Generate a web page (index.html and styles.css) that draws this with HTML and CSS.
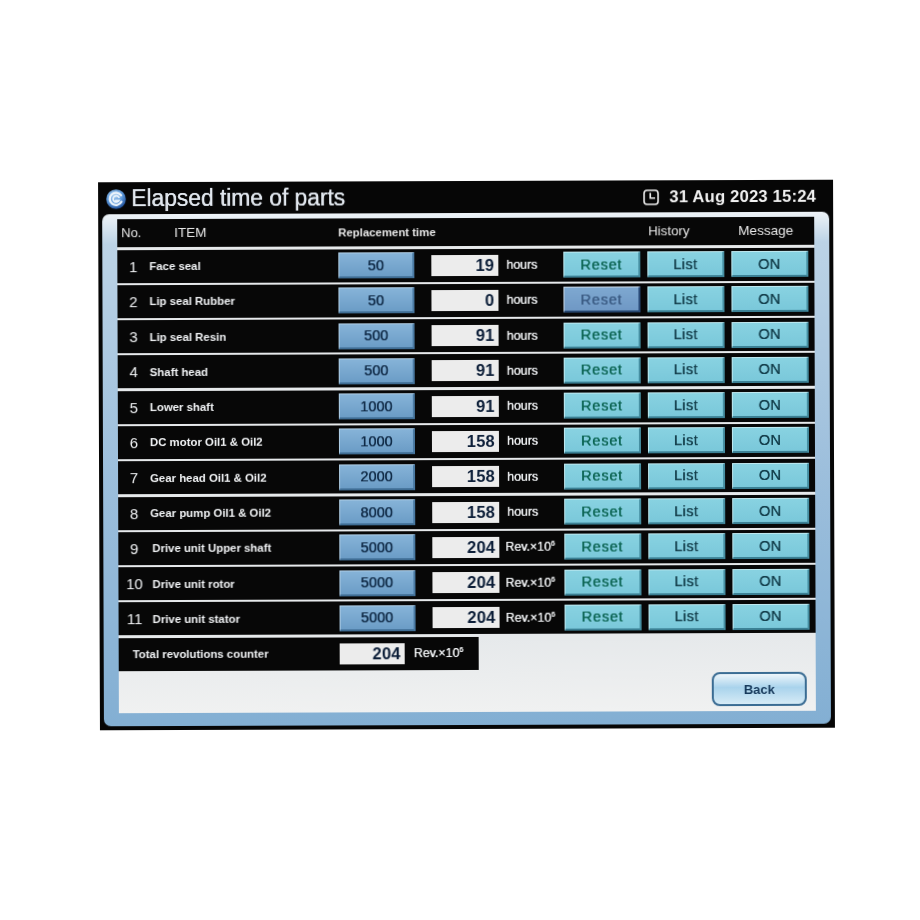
FILE: index.html
```html
<!DOCTYPE html>
<html lang="en">
<head>
<meta charset="utf-8">
<title>Elapsed time of parts</title>
<link rel="stylesheet" href="styles.css">
</head>
<body>
<main class="device">
  <header class="titlebar">
    <svg class="logo" viewBox="0 0 20 20" aria-hidden="true">
      <defs><radialGradient id="lg" cx="40%" cy="30%" r="75%"><stop offset="0" stop-color="#a9cdee"/><stop offset=".55" stop-color="#5f9bdc"/><stop offset="1" stop-color="#17458f"/></radialGradient></defs>
      <circle cx="10" cy="10" r="9.8" fill="url(#lg)"/>
      <path d="M15 6.2A6.2 6.2 0 1 0 15.4 12.6" fill="none" stroke="#eef5fc" stroke-width="2.2" stroke-linecap="round"/>
      <path d="M13 8.2A3.2 3.2 0 1 0 13 11.4H9.6" fill="none" stroke="#eef5fc" stroke-width="1.7" stroke-linecap="round"/>
    </svg>
    <h1 class="title">Elapsed time of parts</h1>
    <div class="clock">
      <svg class="clock-icon" viewBox="0 0 16 16" aria-hidden="true"><rect x="1" y="1" width="14" height="14" rx="3" fill="none" stroke="#f0f0f0" stroke-width="1.6"/><path d="M7.2 3.6V8.8H12" fill="none" stroke="#f0f0f0" stroke-width="1.6"/></svg>
      <span>31 Aug 2023 15:24</span>
    </div>
  </header>
  <section class="panel">
    <div class="content">
      <div class="row head">
        <span class="h-no">No.</span><span class="h-item">ITEM</span><span class="h-rep">Replacement time</span><span class="h-hist">History</span><span class="h-msg">Message</span>
      </div>
      <div class="row"><span class="no">1</span><span class="name">Face seal</span><span class="btn val">50</span><span class="disp">19</span><span class="unit">hours</span><span class="btn act rs">Reset</span><span class="btn act">List</span><span class="btn act on">ON</span></div>
      <div class="row"><span class="no">2</span><span class="name">Lip seal Rubber</span><span class="btn val">50</span><span class="disp">0</span><span class="unit">hours</span><span class="btn act rs off">Reset</span><span class="btn act">List</span><span class="btn act on">ON</span></div>
      <div class="row"><span class="no">3</span><span class="name">Lip seal Resin</span><span class="btn val">500</span><span class="disp">91</span><span class="unit">hours</span><span class="btn act rs">Reset</span><span class="btn act">List</span><span class="btn act on">ON</span></div>
      <div class="row"><span class="no">4</span><span class="name">Shaft head</span><span class="btn val">500</span><span class="disp">91</span><span class="unit">hours</span><span class="btn act rs">Reset</span><span class="btn act">List</span><span class="btn act on">ON</span></div>
      <div class="row"><span class="no">5</span><span class="name">Lower shaft</span><span class="btn val">1000</span><span class="disp">91</span><span class="unit">hours</span><span class="btn act rs">Reset</span><span class="btn act">List</span><span class="btn act on">ON</span></div>
      <div class="row"><span class="no">6</span><span class="name">DC motor Oil1 &amp; Oil2</span><span class="btn val">1000</span><span class="disp">158</span><span class="unit">hours</span><span class="btn act rs">Reset</span><span class="btn act">List</span><span class="btn act on">ON</span></div>
      <div class="row"><span class="no">7</span><span class="name">Gear head Oil1 &amp; Oil2</span><span class="btn val">2000</span><span class="disp">158</span><span class="unit">hours</span><span class="btn act rs">Reset</span><span class="btn act">List</span><span class="btn act on">ON</span></div>
      <div class="row"><span class="no">8</span><span class="name">Gear pump Oil1 &amp; Oil2</span><span class="btn val">8000</span><span class="disp">158</span><span class="unit">hours</span><span class="btn act rs">Reset</span><span class="btn act">List</span><span class="btn act on">ON</span></div>
      <div class="row"><span class="no">9</span><span class="name far">Drive unit Upper shaft</span><span class="btn val">5000</span><span class="disp">204</span><span class="unit rev">Rev.×10<sup>6</sup></span><span class="btn act rs">Reset</span><span class="btn act">List</span><span class="btn act on">ON</span></div>
      <div class="row"><span class="no">10</span><span class="name far">Drive unit rotor</span><span class="btn val">5000</span><span class="disp">204</span><span class="unit rev">Rev.×10<sup>6</sup></span><span class="btn act rs">Reset</span><span class="btn act">List</span><span class="btn act on">ON</span></div>
      <div class="row"><span class="no">11</span><span class="name far">Drive unit stator</span><span class="btn val">5000</span><span class="disp">204</span><span class="unit rev">Rev.×10<sup>6</sup></span><span class="btn act rs">Reset</span><span class="btn act">List</span><span class="btn act on">ON</span></div>
      <div class="footer">
        <div class="row total"><span class="name total-name">Total revolutions counter</span><span class="disp">204</span><span class="unit rev">Rev.×10<sup>6</sup></span></div>
        <span class="back">Back</span>
      </div>
    </div>
  </section>
</main>
</body>
</html>
```
FILE: styles.css
```css
* { box-sizing: border-box; }
html, body { margin: 0; height: 920px; background: #fff; overflow: hidden; }
body { padding: 181px 0 0 98.5px; font-family: "Liberation Sans", Arial, sans-serif; }
.device {
  width: 735px; height: 548px; background: #060606;
  padding: 0 4px 4px 4px; display: flex; flex-direction: column;
  transform: rotate(-0.2deg); filter: blur(.45px);
}
.titlebar { height: 31.5px; flex: none; display: flex; align-items: center; padding: 2px 13px 0 4px; color: #e2e8ef; }
.logo { width: 20px; height: 20px; flex: none; }
.title { margin: 0 0 0 5px; font-size: 23px; font-weight: 400; flex: 1; letter-spacing: -.1px; text-shadow: .2px 0 0 currentColor; }
.clock { display: flex; align-items: center; gap: 10px; font-size: 16.6px; font-weight: 700; color: #f2f2f2; letter-spacing: .2px; }
.clock-icon { width: 16px; height: 16px; }
.panel {
  flex: 1; border-radius: 7px; padding: 5px 15px 13px 15px;
  background: linear-gradient(#eef3f7 0, #bcd3e6 30px, #9dbfdc 50%, #83afd3 100%);
  display: flex;
}
.content { flex: 1; display: flex; flex-direction: column; background: linear-gradient(#e6e9eb 0 85%, #f0f1f1 100%); }
.row {
  height: 33px; margin-bottom: 2.3px; flex: none; background: #070707;
  display: flex; align-items: center; color: #f1f3f5;
}
.head { height: 28px; margin-bottom: 3px; color: #e8e8e8; }
.head span { white-space: nowrap; }
.h-no { margin-left: 4px; width: 53px; font-size: 13px; }
.h-item { width: 164px; font-size: 13.5px; }
.h-rep { width: 310px; font-weight: 700; font-size: 11.4px; }
.h-hist { width: 90px; font-size: 13.3px; }
.h-msg { font-size: 13.6px; }
.no { width: 32px; text-align: center; font-size: 15px; flex: none; }
.name { width: 189px; flex: none; font-size: 11.4px; font-weight: 700; white-space: nowrap; }
.far { padding-left: 2px; }
.btn {
  display: flex; align-items: center; justify-content: center; flex: none; height: 26px;
  border-style: solid; border-width: 1px 2px 2px 1px;
  font-size: 14.5px; text-shadow: .2px 0 0 currentColor;
}
.val { width: 76px; background: linear-gradient(#86b3d8, #6b9cc6); border-color: #b0cee5 #4a7aa3 #3f6d94 #b0cee5; color: #0e2844; }
.act { width: 77px; margin-left: 7px; background: linear-gradient(#88d2e1, #7ac8da); border-color: #bfe9f0 #468fa2 #3b8094 #bfe9f0; color: #123c49; letter-spacing: .4px; }
.rs { color: #0b6452; letter-spacing: .8px; }
.off { background: linear-gradient(#7ea8d0, #6f98c5); border-color: #c9d8e6 #2a4b78 #26466f #c9d8e6; color: #3a5a82; }
.disp { width: 67px; height: 21px; margin-left: 17px; flex: none; background: #ececec; color: #0c1e38; font-size: 16.5px; font-weight: 700; letter-spacing: .2px; text-align: right; line-height: 21px; padding-right: 4px; }
.unit { width: 58px; margin-left: 8px; margin-right: -8px; flex: none; font-size: 12.4px; font-weight: 400; text-shadow: .3px 0 0 currentColor; white-space: nowrap; }
.rev { margin-left: 6px; margin-right: -6px; }
.unit sup { font-size: 7px; line-height: 0; }
.footer { flex: 1; display: flex; align-items: flex-end; justify-content: space-between; padding: 0 9px 5px 0; }
.total { width: 360px; height: 33px; align-self: flex-start; margin: 0; padding-left: 14px; }
.total-name { width: 190px; margin-right: 17px; }
.total .disp { margin-left: 0; width: 65px; }
.total .unit { margin-left: 9px; }
.back {
  width: 95px; height: 34px; border: 2px solid #3a6c93; border-radius: 8px;
  background: linear-gradient(#eef6fb, #a9d3ec 45%, #d6ebf6);
  display: flex; align-items: center; justify-content: center;
  font-size: 13px; font-weight: 700; color: #15385a;
}
```
